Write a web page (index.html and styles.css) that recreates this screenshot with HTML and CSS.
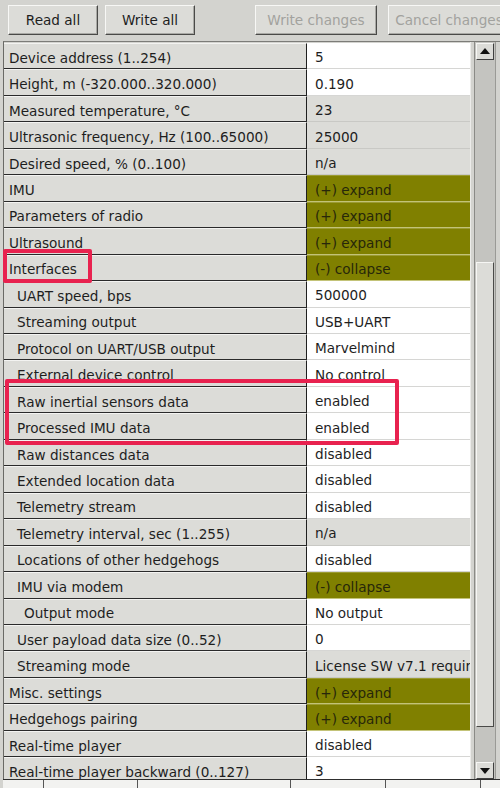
FILE: index.html
```html
<!DOCTYPE html>
<html>
<head>
<meta charset="utf-8">
<link rel="stylesheet" href="styles.css">
</head>
<body>
<div class="toolbar">
  <button class="btn">Read all</button>
  <button class="btn">Write all</button>
  <button class="btn wide off gapl">Write changes</button>
  <button class="btn wide off gapm">Cancel changes</button>
</div>
<div class="panel">
  <div class="grid">
    <div class="l">Device address (1..254)</div><div class="v">5</div>
    <div class="l">Height, m (-320.000..320.000)</div><div class="v">0.190</div>
    <div class="l">Measured temperature, °C</div><div class="v g">23</div>
    <div class="l">Ultrasonic frequency, Hz (100..65000)</div><div class="v g">25000</div>
    <div class="l">Desired speed, % (0..100)</div><div class="v g">n/a</div>
    <div class="l">IMU</div><div class="v o">(+) expand</div>
    <div class="l">Parameters of radio</div><div class="v o">(+) expand</div>
    <div class="l">Ultrasound</div><div class="v o">(+) expand</div>
    <div class="l">Interfaces</div><div class="v o">(-) collapse</div>
    <div class="l i1">UART speed, bps</div><div class="v">500000</div>
    <div class="l i1">Streaming output</div><div class="v">USB+UART</div>
    <div class="l i1">Protocol on UART/USB output</div><div class="v">Marvelmind</div>
    <div class="l i1">External device control</div><div class="v">No control</div>
    <div class="l i1">Raw inertial sensors data</div><div class="v">enabled</div>
    <div class="l i1">Processed IMU data</div><div class="v">enabled</div>
    <div class="l i1">Raw distances data</div><div class="v">disabled</div>
    <div class="l i1">Extended location data</div><div class="v">disabled</div>
    <div class="l i1">Telemetry stream</div><div class="v">disabled</div>
    <div class="l i1">Telemetry interval, sec (1..255)</div><div class="v g">n/a</div>
    <div class="l i1">Locations of other hedgehogs</div><div class="v">disabled</div>
    <div class="l i1">IMU via modem</div><div class="v o">(-) collapse</div>
    <div class="l i2">Output mode</div><div class="v">No output</div>
    <div class="l i1">User payload data size (0..52)</div><div class="v">0</div>
    <div class="l i1">Streaming mode</div><div class="v g">License SW v7.1 required</div>
    <div class="l">Misc. settings</div><div class="v o">(+) expand</div>
    <div class="l">Hedgehogs pairing</div><div class="v o">(+) expand</div>
    <div class="l">Real-time player</div><div class="v">disabled</div>
    <div class="l">Real-time player backward (0..127)</div><div class="v">3</div>
  </div>
  <div class="scroll">
    <div class="arrow"><svg width="10" height="6" viewBox="0 0 10 6"><path d="M0 6 L5 0 L10 6 Z" fill="#111"/></svg></div>
    <div class="thumb"></div>
    <div class="arrow down"><svg width="10" height="6" viewBox="0 0 10 6"><path d="M0 0 L5 6 L10 0 Z" fill="#111"/></svg></div>
  </div>
</div>
<div class="footer">
  <span class="tick t1"></span><span class="tick t2"></span><span class="tick t3"></span><span class="tick t4"></span><span class="tick t5"></span>
</div>
<div class="mark m1"></div>
<div class="mark m2"></div>
</body>
</html>
```
FILE: styles.css
```css
html, body {
  margin: 0;
  padding: 0;
}
body {
  position: relative;
  width: 500px;
  height: 788px;
  overflow: hidden;
  background: #d3d3cf;
  font-family: "DejaVu Sans", sans-serif;
  font-size: 13.6px;
  color: #1e1e1e;
}
.toolbar {
  display: flex;
  align-items: flex-start;
  gap: 7px;
  height: 41px;
  box-sizing: border-box;
  padding: 5px 0 0 8px;
  white-space: nowrap;
}
.btn {
  flex-shrink: 0;
  width: 90px;
  height: 30px;
  box-sizing: border-box;
  margin: 0;
  padding: 0;
  background: #dcdcd8;
  border: 1px solid;
  border-color: #f7f7f5 #4a4a48 #4a4a48 #f7f7f5;
  box-shadow: inset -1px -1px 0 #a9a9a5;
  font: inherit;
  color: #1e1e1e;
  text-align: center;
  line-height: 28px;
}
.btn.wide {
  width: 122px;
}
.btn.off {
  color: #a2a29e;
}
.gapl {
  margin-left: 53px;
}
.gapm {
  margin-left: 4px;
}
.panel {
  display: flex;
  margin-left: 3px;
  height: 738px;
  box-sizing: border-box;
  border-top: 1px solid #7c7c78;
  border-left: 1px solid #6a6a66;
  overflow: hidden;
}
.grid {
  display: grid;
  grid-template-columns: 303px 163px;
  grid-auto-rows: 26.46px;
  width: 466px;
  flex-shrink: 0;
  padding-top: 1px;
  border-right: 1px solid #ececea;
  align-content: start;
}
.l, .v {
  box-sizing: border-box;
  display: flex;
  align-items: center;
  padding-top: 3px;
  white-space: nowrap;
  overflow: hidden;
}
.l {
  background: #dcdcd8;
  border-top: 1px solid #f3f3f1;
  border-bottom: 1px solid #2a2a2a;
  border-right: 1px solid #1f1f1f;
  padding-left: 5px;
}
.l.i1 {
  padding-left: 13px;
}
.l.i2 {
  padding-left: 20px;
}
.v {
  background: #ffffff;
  border-bottom: 1px solid #d6d6d4;
  padding-left: 8px;
}
.v.g {
  background: #dcdcd8;
  border-bottom: 1px solid #c9c9c5;
}
.v.o {
  background: #808000;
  color: #27270a;
  border-top: 1px solid #9b9b32;
  border-bottom: 1px solid #c3c378;
}
.scroll {
  display: flex;
  flex-direction: column;
  width: 22px;
  margin-left: 3px;
  box-sizing: border-box;
  border-left: 1px solid #8a8a86;
  border-right: 1px solid #9a9a96;
  background: #c4c4c0;
  padding: 1px 1px 0 1px;
}
.arrow {
  height: 17px;
  box-sizing: border-box;
  background: #dcdcd8;
  border: 1px solid;
  border-color: #f6f6f4 #404040 #404040 #f6f6f4;
  display: flex;
  align-items: center;
  justify-content: center;
}
.thumb {
  height: 466px;
  margin-top: 202px;
  box-sizing: border-box;
  background: #dcdcd8;
  border: 1px solid;
  border-color: #f6f6f4 #4a4a48 #4a4a48 #f6f6f4;
}
.arrow.down {
  margin-top: 35px;
}
.footer {
  position: relative;
  height: 9px;
  margin-left: 3px;
  background: #f2f2f0;
  border-top: 1px solid #2e2e2e;
}
.tick {
  position: absolute;
  top: 0;
  width: 1px;
  height: 9px;
  background: #555;
}
.t1 { left: 40px; }
.t2 { left: 134px; }
.t3 { left: 287px; }
.t4 { left: 382px; }
.t5 { left: 477px; }
.mark {
  position: absolute;
  box-sizing: border-box;
  border: 4px solid #e8224f;
  border-radius: 2px;
}
.m1 {
  left: 3px;
  top: 249px;
  width: 89px;
  height: 34px;
}
.m2 {
  left: 5px;
  top: 379px;
  width: 394px;
  height: 66px;
}
```
